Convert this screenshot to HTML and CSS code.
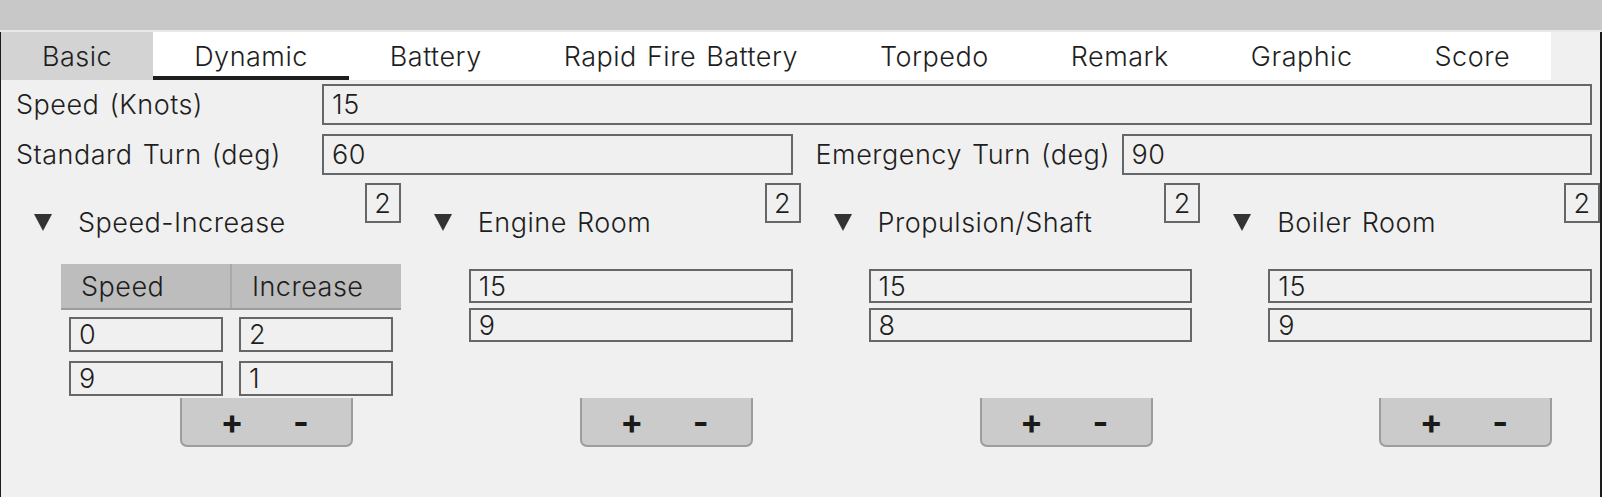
FILE: index.html
```html
<!DOCTYPE html>
<html lang="en">

<head>
  <meta charset="UTF-8">
  <title>Dynamic</title>
  <link rel="stylesheet" href="styles.css">
</head>

<body>
  <div class="titlebar"></div>

  <div class="window">
    <div class="tabs">
      <div class="tab basic">Basic</div>
      <div class="tab active">Dynamic</div>
      <div class="tab">Battery</div>
      <div class="tab">Rapid Fire Battery</div>
      <div class="tab">Torpedo</div>
      <div class="tab">Remark</div>
      <div class="tab">Graphic</div>
      <div class="tab">Score</div>
    </div>

    <div class="fields">
      <div class="row">
        <div class="field">
          <label>Speed (Knots)</label>
          <input class="input" type="text" value="15">
        </div>
      </div>
      <div class="row">
        <div class="field">
          <label>Standard Turn (deg)</label>
          <input class="input" type="text" value="60">
        </div>
        <div class="field">
          <label>Emergency Turn (deg)</label>
          <input class="input" type="text" value="90">
        </div>
      </div>
    </div>

    <div class="lists">
      <!-- speed / increase table -->
      <div class="list">
        <div class="list-head">
          <div class="toggle">
            <svg class="arrow" width="18" height="17" viewBox="0 0 18 17"><polygon points="0,0 18,0 9,17" /></svg>
            <span>Speed-Increase</span>
          </div>
          <input class="input size" type="text" value="2">
        </div>
        <div class="list-body">
          <div class="table-head">
            <div>Speed</div>
            <div>Increase</div>
          </div>
          <div class="table-row">
            <input class="input" type="text" value="0">
            <input class="input" type="text" value="2">
          </div>
          <div class="table-row">
            <input class="input" type="text" value="9">
            <input class="input" type="text" value="1">
          </div>
        </div>
        <div class="list-btns">
          <button>+</button>
          <button>-</button>
        </div>
      </div>

      <div class="list">
        <div class="list-head">
          <div class="toggle">
            <svg class="arrow" width="18" height="17" viewBox="0 0 18 17"><polygon points="0,0 18,0 9,17" /></svg>
            <span>Engine Room</span>
          </div>
          <input class="input size" type="text" value="2">
        </div>
        <div class="list-body">
          <input class="input item" type="text" value="15">
          <input class="input item" type="text" value="9">
        </div>
        <div class="list-btns">
          <button>+</button>
          <button>-</button>
        </div>
      </div>

      <div class="list">
        <div class="list-head">
          <div class="toggle">
            <svg class="arrow" width="18" height="17" viewBox="0 0 18 17"><polygon points="0,0 18,0 9,17" /></svg>
            <span>Propulsion/Shaft</span>
          </div>
          <input class="input size" type="text" value="2">
        </div>
        <div class="list-body">
          <input class="input item" type="text" value="15">
          <input class="input item" type="text" value="8">
        </div>
        <div class="list-btns">
          <button>+</button>
          <button>-</button>
        </div>
      </div>

      <div class="list">
        <div class="list-head">
          <div class="toggle">
            <svg class="arrow" width="18" height="17" viewBox="0 0 18 17"><polygon points="0,0 18,0 9,17" /></svg>
            <span>Boiler Room</span>
          </div>
          <input class="input size" type="text" value="2">
        </div>
        <div class="list-body">
          <input class="input item" type="text" value="15">
          <input class="input item" type="text" value="9">
        </div>
        <div class="list-btns">
          <button>+</button>
          <button>-</button>
        </div>
      </div>
    </div>
  </div>
</body>

</html>
```

FILE: styles.css
```css
body {
  margin: 0;
  background: #f0f0f0;
  font-family: Inter, "Noto Sans", sans-serif;
  font-size: 27px;
  font-weight: 300;
  letter-spacing: 0.5px;
  word-spacing: 2px;
  color: #1e1e1e;
}
.titlebar {
  height: 30px;
  background: #c8c8c8;
  border-bottom: 2px solid #e8e8e8;
}
.window {
  height: 465px;
  box-sizing: border-box;
  border-left: 1px solid #1c1c1c;
  border-right: 2px solid #1c1c1c;
}
.tabs {
  display: flex;
  height: 48px;
}
.tab {
  display: flex;
  align-items: center;
  padding: 0 41px;
  background: #fff;
}
.tab.basic {
  background: #d3d3d3;
}
.tab.active {
  box-shadow: inset 0 -4px 0 #1e1e1e;
}
.input {
  box-sizing: border-box;
  min-width: 0;
  margin: 0;
  padding: 0 8px;
  border: 2px solid #676767;
  background: transparent;
  font: inherit;
  letter-spacing: inherit;
  color: #1e1e1e;
  outline: none;
}
.fields {
  display: flex;
  flex-direction: column;
  gap: 9px;
  padding: 4px 8px 0 8px;
}
.row {
  display: flex;
  gap: 16px;
}
.field {
  flex: 1;
  display: flex;
  align-items: center;
}
.field label {
  flex: none;
  width: 306px;
  margin-left: 7px;
}
.field .input {
  flex: 1;
  height: 41px;
}
.lists {
  display: flex;
  margin-top: 1px;
}
.list {
  flex: 1;
  min-width: 0;
  display: flex;
  flex-direction: column;
}
.list-head {
  display: flex;
  align-items: flex-start;
  height: 88px;
}
.toggle {
  flex: 1;
  display: flex;
  align-items: center;
  height: 38px;
  margin-top: 27px;
  padding-left: 33px;
}
.arrow {
  fill: #333;
  margin-right: 26px;
}
.input.size {
  width: 36px;
  height: 40px;
  margin-top: 7px;
  padding: 0;
  text-align: center;
}
.list-body {
  flex: 1;
  margin-left: 60px;
}
.table-head {
  display: flex;
  height: 46px;
  box-sizing: border-box;
  background: #bdbdbd;
  border-bottom: 2px solid #9d9d9d;
}
.table-head div {
  flex: 1;
  display: flex;
  align-items: center;
  padding-left: 20px;
}
.table-head div + div {
  border-left: 2px solid #a9a9a9;
}
.table-row {
  display: flex;
}
.table-row .input {
  flex: 1;
  width: 0;
  height: 35px;
  margin: 7px 8px 2px;
}
.input.item {
  display: block;
  width: calc(100% - 16px);
  height: 34px;
  margin: 5px 8px;
}
.list-btns {
  display: flex;
  justify-content: center;
  width: 173px;
  height: 49px;
  margin-left: 179px;
  box-sizing: border-box;
  background: #cbcbcb;
  border: 2px solid #9d9d9d;
  border-top: none;
  border-radius: 0 0 7px 7px;
}
.list-btns button {
  width: 69px;
  padding: 0;
  border: none;
  background: none;
  font: inherit;
  font-size: 34px;
  font-weight: 700;
  letter-spacing: 0;
  color: #1a1a1a;
}
```
